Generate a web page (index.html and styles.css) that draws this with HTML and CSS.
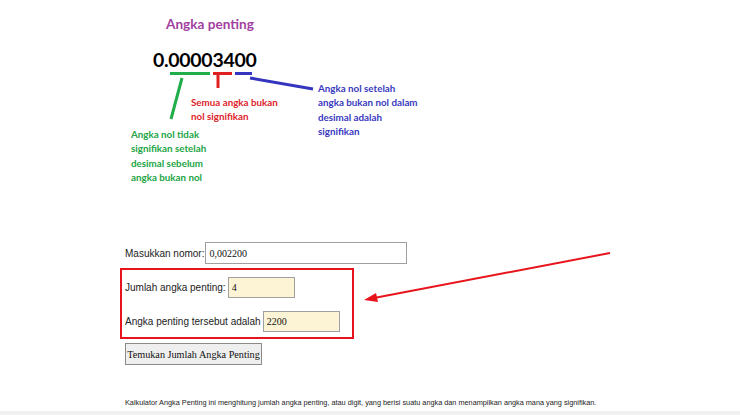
FILE: index.html
```html
<!DOCTYPE html>
<html>
<head>
<meta charset="utf-8">
<link rel="stylesheet" href="styles.css">
</head>
<body>
<div class="page">
  <div class="diagram">
    <div class="d-title">Angka penting</div>
    <div class="d-number">0.00003400</div>
    <svg class="d-lines" width="740" height="235" viewBox="0 0 740 235">
      <line x1="170" y1="73.5" x2="210" y2="73.5" stroke="#1fae4a" stroke-width="3"/>
      <line x1="213" y1="73.5" x2="232" y2="73.5" stroke="#e02020" stroke-width="3"/>
      <line x1="235" y1="73.5" x2="252" y2="73.5" stroke="#3535c0" stroke-width="3"/>
      <line x1="218" y1="75" x2="218" y2="88" stroke="#e02020" stroke-width="3"/>
      <line x1="182" y1="78" x2="171" y2="119" stroke="#1fae4a" stroke-width="3"/>
      <line x1="250" y1="78" x2="313" y2="89" stroke="#3535c0" stroke-width="3"/>
    </svg>
    <div class="d-note d-red">Semua angka bukan<br>nol signifikan</div>
    <div class="d-note d-blue">Angka nol setelah<br>angka bukan nol dalam<br>desimal adalah<br>signifikan</div>
    <div class="d-note d-green">Angka nol tidak<br>signifikan setelah<br>desimal sebelum<br>angka bukan nol</div>
  </div>

  <form class="calc">
    <div class="row">
      <label class="lbl">Masukkan nomor:</label><input class="field field-main" type="text" value="0,002200">
    </div>
    <div class="result-box">
      <div class="row">
        <label class="lbl">Jumlah angka penting:</label><input class="field field-out field-count" type="text" value="4">
      </div>
      <div class="row">
        <label class="lbl">Angka penting tersebut adalah</label><input class="field field-out field-digits" type="text" value="2200">
      </div>
    </div>
    <div class="row">
      <button class="btn" type="button">Temukan Jumlah Angka Penting</button>
    </div>
  </form>

  <p class="footer">Kalkulator Angka Penting ini menghitung jumlah angka penting, atau digit, yang berisi suatu angka dan menampilkan angka mana yang signifikan.</p>

  <svg class="arrow" width="740" height="415" viewBox="0 0 740 415">
    <line x1="610" y1="253" x2="374" y2="298" stroke="#e8141c" stroke-width="2"/>
    <polygon points="364,300 376,293 378,302" fill="#e8141c"/>
  </svg>
</div>
</body>
</html>
```

FILE: styles.css
```css
html, body {
  margin: 0;
  padding: 0;
  background: #ffffff;
}
.page {
  position: relative;
  width: 740px;
  height: 415px;
  overflow: hidden;
  border-bottom: 4px solid #f0f0f0;
  box-sizing: border-box;
}
.diagram {
  position: relative;
  height: 242px;
}
.d-lines {
  position: absolute;
  left: 0;
  top: 0;
}
.d-title {
  position: absolute;
  left: 166px;
  top: 16px;
  font-family: "Lato", "Open Sans", sans-serif;
  font-weight: 700;
  font-size: 13.6px;
  color: #a23fa0;
}
.d-number {
  position: absolute;
  left: 153px;
  top: 48px;
  font-family: "Lato", "Open Sans", sans-serif;
  font-weight: 700;
  font-size: 19.5px;
  letter-spacing: -0.3px;
  color: #000;
}
.d-note {
  position: absolute;
  font-family: "Lato", "Open Sans", sans-serif;
  font-weight: 700;
  font-size: 9.8px;
  line-height: 14.3px;
}
.d-red {
  left: 191px;
  top: 95px;
  color: #e0242c;
}
.d-blue {
  left: 318px;
  top: 81px;
  color: #3a3abf;
}
.d-green {
  left: 131px;
  top: 127px;
  color: #22a545;
}
.calc {
  margin: 0;
  padding-left: 125px;
  font-family: "Liberation Sans", Arial, sans-serif;
  font-size: 10px;
  color: #222;
}
.row {
  display: flex;
  align-items: center;
}
.lbl {
  margin-right: 1px;
}
.field {
  box-sizing: border-box;
  height: 22px;
  border: 1px solid #a0a0a0;
  padding: 0 3px;
  font-family: "Liberation Serif", "Times New Roman", serif;
  font-size: 10px;
  color: #111;
  background: #fff;
}
.field-main {
  width: 202px;
}
.field-out {
  background: #fdf4d6;
  height: 21px;
}
.field-count {
  width: 67px;
  margin-left: 1px;
}
.field-digits {
  width: 77px;
  margin-left: 1px;
}
.result-box {
  margin: 4px 0 4px -5px;
  width: 234px;
  height: 71px;
  box-sizing: border-box;
  border: 2px solid #e8141c;
  padding: 7px 0 0 3px;
  display: flex;
  flex-direction: column;
  gap: 13px;
}
.btn {
  box-sizing: border-box;
  height: 22px;
  width: 137px;
  padding: 0;
  white-space: nowrap;
  font-family: "Liberation Serif", "Times New Roman", serif;
  font-size: 10.2px;
  color: #111;
  background: #efefef;
  border: 1px solid #8a8a8a;
  border-radius: 0;
}
.footer {
  margin: 33px 0 0 125px;
  font-family: "Liberation Sans", Arial, sans-serif;
  font-size: 7.3px;
  color: #222;
}
.arrow {
  position: absolute;
  left: 0;
  top: 0;
  pointer-events: none;
}
```
